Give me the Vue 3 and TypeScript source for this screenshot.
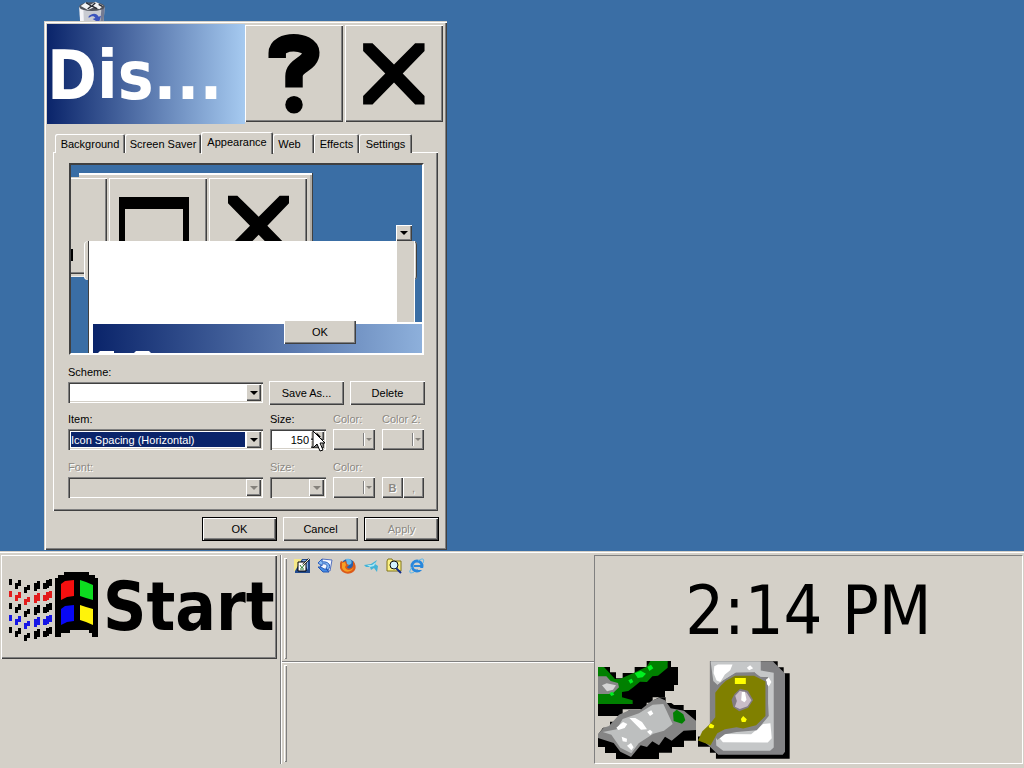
<script setup lang="ts">
import { ref } from 'vue'

const tabs = ['Background', 'Screen Saver', 'Appearance', 'Web', 'Effects', 'Settings']
const activeTab = ref('Appearance')
const scheme = ref('')
const item = ref('Icon Spacing (Horizontal)')
const size = ref('150')

interface Dash { x: number; y: number; w: number; h: number; c: string }
const dashColors = ['#000', '#e21b1b', '#000', '#1616e6', '#000']
const dashCells = [
  { x: 1, y: 8, w: 3, h: 6 },
  { x: 7, y: 12, w: 3, h: 6 },
  { x: 10, y: 9, w: 3, h: 6 },
  { x: 16, y: 16, w: 3, h: 6 },
  { x: 19, y: 14, w: 3, h: 5 },
  { x: 26, y: 12, w: 3, h: 8 },
  { x: 29, y: 10, w: 3, h: 8 },
  { x: 35, y: 12, w: 4, h: 6 },
  { x: 38, y: 9, w: 3, h: 8 },
  { x: 41, y: 8, w: 3, h: 7 },
]
const dashes: Dash[] = dashColors.flatMap((c, row) =>
  dashCells.map((d) => ({ ...d, y: d.y + row * 12, c })),
)
const cross = '0,0 28,0 92,63 155,0 183,0 183,23 118,90 183,157 183,182 155,182 92,117 28,182 0,182 0,157 66,90 0,23'
</script>

<template>
  <div class="screen">
    <main class="desktop">
      <svg class="bin" viewBox="0 0 120 78" aria-label="Recycle Bin">
        <path d="M22 20L98 20L94 78H25Z" fill="#c9cbd2" />
        <path d="M22 20L34 26L36 78H25Z" fill="#f4f4f8" />
        <path d="M88 28L98 20L94 78H84Z" fill="#747b92" />
        <ellipse cx="60" cy="20" rx="38" ry="13" fill="#50535c" />
        <path d="M26 18L42 7L56 14L70 5L94 17L82 28L66 22L48 30Z" fill="#f2f3f5" />
        <path d="M42 8L58 18L47 27M70 8L60 18L75 26M80 13L92 20" stroke="#252932" stroke-width="4" fill="none" />
        <path d="M50 49C60 38 75 39 80 50L87 47L81 68L62 57L70 54C66 47 58 48 50 54Z" fill="#3b54bd" />
        <path d="M46 66L57 62L68 78H47Z" fill="#7c8dd8" />
      </svg>

      <section class="dialog" aria-label="Display Properties">
        <header class="titlebar">
          <h1>Dis...</h1>
          <button class="caption raised" aria-label="Help">
            <svg viewBox="615 76 292 288">
              <path d="M711 174V160C711 117 809 119 811 158C812 192 761 194 761 228V262" fill="none" stroke="#000" stroke-width="52" />
              <circle cx="761" cy="313" r="26" />
            </svg>
          </button>
          <button class="caption raised" aria-label="Close">
            <svg viewBox="918 76 292 288"><polygon transform="translate(972 130)" :points="cross" /></svg>
          </button>
        </header>

        <nav class="tabs" role="tablist">
          <button v-for="t in tabs" :key="t" role="tab" class="tab" :class="{ active: t === activeTab }" :aria-selected="t === activeTab" @click="activeTab = t">{{ t }}</button>
        </nav>

        <div class="panel">
          <div class="preview">
            <div class="pv-inactive">
              <div class="pv-bar">
                <span class="pv-cap pv-min"><i></i></span>
                <span class="pv-cap"><svg viewBox="0 0 98 96"><path d="M10 19H80V90H10ZM16 31V84H74V31Z" fill-rule="evenodd" /></svg></span>
                <span class="pv-cap"><svg viewBox="480 70 294 288"><polygon transform="translate(537 123)" :points="cross" /></svg></span>
              </div>
            </div>
            <div class="pv-frame"></div>
            <div class="pv-window"></div>
            <span class="pv-arrow raised"><b class="tri"></b></span>
            <div class="pv-message">
              <svg viewBox="0 0 60 2"><path d="M7 0H21V2H5ZM43 0H56L58 2H41Z" fill="#fff" /></svg>
            </div>
            <button class="pv-ok raised">OK</button>
          </div>

          <form class="form" @submit.prevent>
            <div class="row">
              <div class="field wide">
                <label for="scheme">Scheme:</label>
                <div class="combo">
                  <select id="scheme" v-model="scheme"><option value=""></option></select>
                  <span class="arrow raised"><b class="tri"></b></span>
                </div>
              </div>
              <button type="button" class="btn raised">Save As...</button>
              <button type="button" class="btn raised">Delete</button>
            </div>

            <div class="grid">
              <div class="field">
                <label for="item">Item:</label>
                <div class="combo">
                  <select id="item" v-model="item" class="picked"><option>Icon Spacing (Horizontal)</option></select>
                  <span class="arrow raised"><b class="tri"></b></span>
                </div>
              </div>
              <div class="field">
                <label for="size">Size:</label>
                <div class="combo">
                  <input id="size" v-model="size" type="text" />
                  <span class="spin"><button type="button" class="raised" aria-label="Increase"><b class="tri up"></b></button><button type="button" class="raised" aria-label="Decrease"><b class="tri"></b></button></span>
                </div>
              </div>
              <div class="field off">
                <label for="color1">Color:</label>
                <button id="color1" type="button" class="swatch raised" disabled><i></i><b class="tri"></b></button>
              </div>
              <div class="field off">
                <label for="color2">Color 2:</label>
                <button id="color2" type="button" class="swatch raised" disabled><i></i><b class="tri"></b></button>
              </div>

              <div class="field off">
                <label for="font">Font:</label>
                <div class="combo">
                  <select id="font" disabled><option></option></select>
                  <span class="arrow raised"><b class="tri"></b></span>
                </div>
              </div>
              <div class="field off">
                <label for="fsize">Size:</label>
                <div class="combo">
                  <select id="fsize" disabled><option></option></select>
                  <span class="arrow raised"><b class="tri"></b></span>
                </div>
              </div>
              <div class="field off">
                <label for="color3">Color:</label>
                <button id="color3" type="button" class="swatch raised" disabled><i></i><b class="tri"></b></button>
              </div>
              <div class="field off styles">
                <button type="button" class="raised bold" disabled>B</button>
                <button type="button" class="raised" disabled>,</button>
              </div>
            </div>
          </form>
        </div>

        <footer class="actions">
          <button class="btn raised framed">OK</button>
          <button class="btn raised">Cancel</button>
          <button class="btn raised framed" disabled>Apply</button>
        </footer>
      </section>

      <svg class="cursor" viewBox="0 0 13 22">
        <path d="M1 1V18L5 14L8 21L11 20L8 13H13Z" fill="#fff" stroke="#000" />
      </svg>
    </main>

    <footer class="taskbar">
      <div class="start-area">
        <button class="start raised">
          <svg class="flag" viewBox="0 0 92 72">
            <rect v-for="(d, i) in dashes" :key="i" :x="d.x" :y="d.y" :width="d.w" :height="d.h" :fill="d.c" />
            <path d="M47 7H50V4H56V1H81V4H87V7H90V66H84V62H81V59H62V62H53V66H47Z" />
            <path d="M53 13L57 10L66 9V25L59 26L53 29Z" fill="#f40f0f" />
            <path d="M72 9L78 11L85 14V29L78 27L72 25Z" fill="#0ddc20" />
            <path d="M53 38L57 35L66 34V50L59 51L53 54Z" fill="#0808f5" />
            <path d="M72 34L78 36L85 38V54L78 51L72 49Z" fill="#fff30a" />
          </svg>
          <span>Start</span>
        </button>
      </div>

      <div class="bands">
        <div class="band">
          <span class="grip"></span>
          <a href="#" aria-label="Show Desktop">
            <svg viewBox="0 0 16 16"><path d="M0 1H16V15H1V13H0Z" fill="#234b8e" /><path d="M0 1H8L1 13H0Z" fill="#f5e889" /><path d="M8 2H14V12Z" fill="#80abe2" /><path d="M4 4H12V13H4Z" fill="#fff" stroke="#000" /><path d="M15 1L9 7" fill="none" stroke="#222" stroke-width="2" /><path d="M15 1L9 7" stroke="#f1ead0" /><path d="M6 7L8 10L10 7M6 11H10" fill="none" stroke="#26792a" /></svg>
          </a>
          <a href="#" aria-label="Outlook Express">
            <svg viewBox="0 0 16 16"><path d="M5 1L15 2L13 13L3 11Z" fill="#f4f7ff" stroke="#5370bd" /><path d="M5 1L1 5L5 8V6C10 5 11 8 9 10L11 12C15 7 11 3 5 4Z" fill="#83b8f2" stroke="#2e60bd" /><path d="M1 9L6 14H12L9 11H7L4 9Z" fill="#438ae5" stroke="#2759b4" /></svg>
          </a>
          <a href="#" aria-label="Firefox">
            <svg viewBox="0 0 16 16"><circle cx="8" cy="8" r="7" fill="#2862ac" /><path d="M6 1C10 0 13 3 11 6L7 8Z" fill="#67b9e9" /><path d="M1 3L3 4L6 3L7 6L9 7L7 9C8 12 13 10 13 7V3C16 6 17 11 13 14C9 17 2 16 0 10C-1 7 0 5 1 3Z" fill="#dc5a18" /><path d="M2 5L5 4L6 7L5 9C6 13 11 13 14 9C12 15 4 15 2 10Z" fill="#f6a025" /></svg>
          </a>
          <a href="#" aria-label="Messenger">
            <svg viewBox="0 0 16 16"><path d="M1 7L8 6L14 2L12 6L15 8L14 14L11 10L8 12L7 9L3 9Z" fill="#41b3d8" /><path d="M4 7L9 7L13 4L11 8L7 9Z" fill="#a9e6f3" /></svg>
          </a>
          <a href="#" aria-label="Search">
            <svg viewBox="0 0 16 16"><path d="M1 3L2 1H6L7 3H15V13H1Z" fill="#fbf183" stroke="#81751a" /><circle cx="8" cy="7" r="4" fill="#d4f3ff" stroke="#111" /><path d="M10 10L15 15" stroke="#132d8b" stroke-width="2" /></svg>
          </a>
          <a href="#" aria-label="Internet Explorer">
            <svg viewBox="0 0 16 16"><circle cx="8" cy="8" r="5" fill="none" stroke="#2887dc" stroke-width="3" /><path d="M9 10H15V12H9Z" fill="#d4d0c8" /><path d="M5 7H13V9H5Z" fill="#2887dc" /><path d="M3 9C-1 15 1 16 5 14M9 3C13 0 16 0 14 5" fill="none" stroke="#55b7ef" stroke-width="1" /></svg>
          </a>
        </div>
        <div class="band"><span class="grip"></span></div>
      </div>

      <div class="tray">
        <time>2:14 PM</time>
        <div class="tray-icons">
          <svg class="t1" viewBox="24 33 294 294">
            <path d="M24 51H60V67H78V85H98V69H134V51H170V33H243V51H264V105H252V123H225V142H188V158H170V178H98V198H24Z" />
            <path d="M24 51H42L75 87H90L132 68L170 50L181 33H233V53L204 77L187 79L171 96L150 95L130 112L115 123L96 126V142L128 151V162H24Z" fill="#008000" />
            <path d="M24 79H49L62 93L84 99L87 112L66 132H24Z" fill="#878787" />
            <path d="M36 106L50 100L78 106L69 119L51 124Z" fill="#d5d5d5" />
            <path d="M134 70L152 62L168 71L158 82L143 84ZM172 51L183 44L190 55L178 63ZM115 91L125 86L130 96L121 101ZM58 130L67 125L73 134L64 138Z" fill="#00f020" />
            <path d="M24 254L39 233H60V215H98V198L117 181L151 180L187 152L208 142H227V159H244L252 165H281V180H318V272H282V291H246V308H207V327H78V309H45V291H24Z" />
            <path d="M24 252L41 233L57 228L87 194L121 179L151 180L187 151L208 143L225 151L242 175L282 182L318 212V240L281 242L245 272L225 260L207 286L187 274L171 291L152 286L123 321L91 305L71 279L24 264Z" fill="#858585" />
            <path d="M38 246L80 238L98 207L147 190L188 164L220 162L248 222L222 242L190 251L146 280L124 310L91 293L64 254Z" fill="#bdbfbf" />
            <path d="M79 233L99 216L112 222L104 234L85 240ZM118 204H136L156 216L171 238L153 239ZM172 187L184 181L190 191L180 198ZM95 260L111 266L110 276L98 274ZM111 287L123 279L131 292L124 301ZM171 245L180 239L188 246L181 255Z" fill="#fff" />
            <path d="M249 188L260 179L280 193L286 211L276 221L251 213Z" fill="#008000" />
          </svg>
          <svg class="t2" viewBox="324 33 277 294">
            <path d="M360 33H564V51H582V69H600V327H378V309H360V291H324V260H360Z" />
            <path d="M360 33H549L586 70V306L579 315H385L360 291L348 280L360 223Z" fill="#828284" />
            <path d="M362 33H513V61L552 68V293L541 303H400L379 287L378 264L403 248L501 239L535 198V81L502 80L495 66L438 68L400 91L383 105L370 93Z" fill="#c5c7c8" />
            <path d="M373 48L384 43H428L421 60L405 73L391 96L380 91L371 69ZM471 53L481 45L490 54L478 60ZM529 88L537 82L545 96L537 109L529 99ZM389 265L404 252L484 253L520 222L542 220L546 265L534 278L399 277Z" fill="#fff" />
            <path d="M400 91L438 68H495L531 94L537 198L501 241L440 246L405 253L382 270L370 250L362 130L383 105Z" fill="#828284" />
            <path d="M436 77H493L527 94V198L499 226L460 236L440 232L405 238L382 250L362 286L324 272L337 244L360 222L376 202V128L393 106L408 92Z" fill="#808000" />
            <path d="M434 132L451 116L474 122L490 150L475 173L448 184L430 171L425 149Z" fill="#827b82" />
            <path d="M436 137L450 122L470 127L485 151L473 169L450 177L435 170L441 153Z" fill="#c9bdc8" />
            <path d="M456 126L465 125L470 149L464 157L454 151Z" fill="#fff" />
            <path d="M435 84H468V102H435ZM453 207L460 198L471 208L467 216H456ZM356 228L362 221L373 227L370 235L359 234Z" fill="#ff0" />
          </svg>
        </div>
      </div>
    </footer>
  </div>
</template>

<style>
body { margin: 0; background: #3a6ea5; }
</style>

<style scoped>
* { box-sizing: border-box; }
.screen { min-height: 100vh; display: flex; flex-direction: column; font: 11px/14px "Liberation Sans", Arial, sans-serif; color: #000; }
button, input, select { font: inherit; color: inherit; margin: 0; padding: 0; border: 0; background: none; border-radius: 0; }
svg { display: block; }
.desktop { position: relative; flex: 1; min-height: 551px; background: #3a6ea5; overflow: hidden; }
.bin { position: absolute; left: 72px; top: 0; width: 40px; height: 26px; }
.raised { background: #d4d0c8; box-shadow: inset 1px 1px #fff, inset -1px -1px #404040, inset -2px -2px #808080; }

.dialog { position: absolute; left: 44px; top: 21px; width: 403px; padding: 3px 4px 9px 3px; background: #d4d0c8; box-shadow: inset 1px 1px #d4d0c8, inset 2px 2px #fff, inset -1px -1px #404040, inset -2px -2px #808080; }
.titlebar { display: flex; gap: 2px; height: 100px; align-items: flex-start; padding-top: 1px; background: linear-gradient(90deg, #0a246a, #a6caf0 198px, #d4d0c8 198px); }
.titlebar h1 { flex: 1; margin: 0; white-space: nowrap; color: #fff; font: bold 67px/102px "DejaVu Sans Condensed", "DejaVu Sans", sans-serif; min-width: 0; }
.caption { width: 98px; height: 97px; flex: none; }
.caption svg { width: 98px; height: 97px; }

.tabs { display: grid; grid-template-columns: 70fr 76fr 72fr 41fr 45fr 53fr; align-items: end; height: 22px; margin: 7px 31px 0 8px; position: relative; }
.tab { height: 19px; line-height: 20px; min-width: 0; white-space: nowrap; text-align: center; background: #d4d0c8; box-shadow: inset 1px 1px #fff, inset -1px 0 #404040, inset -2px 0 #808080; border-radius: 2px 2px 0 0; }
.tab:nth-child(4) { padding-right: 8px; }
.tab.active { height: 22px; margin-bottom: -1px; padding-bottom: 2px; z-index: 1; }
.panel { margin: -1px 5px 0 6px; padding: 11px 14px 13px 16px; box-shadow: inset 1px 1px #fff, inset -1px -1px #404040, inset -2px -2px #808080; }

.preview { position: relative; height: 192px; border: 2px solid; border-color: #404040 #fff #fff #404040; background: #3a6ea5; overflow: hidden; }
.pv-inactive { position: absolute; left: -62px; top: 8px; width: 304px; height: 104px; background: #d4d0c8; box-shadow: inset -1px 0 #404040, inset 0 2px #fff, inset -3px 0 #b0aca5; border-bottom: 1px solid #eee; }
.pv-inactive::before { content: ""; position: absolute; left: 0; top: 0; width: 70px; height: 4px; background: #3a6ea5; }
.pv-bar { display: flex; gap: 2px; padding-top: 5px; }
.pv-cap { width: 98px; height: 96px; flex: none; box-shadow: inset 1px 1px #fff, inset -1px -1px #404040, inset -2px -2px #808080; }
.pv-cap svg { width: 98px; height: 96px; }
.pv-min i { display: block; width: 42px; height: 12px; margin: 71px 0 0 22px; background: #000; }
.pv-frame { position: absolute; left: 13px; top: 76px; width: 333px; height: 39px; background: #d4d0c8; border-radius: 4px; box-shadow: inset 1px 0 #fff, inset -1px 0 #404040; }
.pv-window { position: absolute; left: 17px; top: 76px; width: 326px; height: 112px; background: #fff; border-left: 1px solid #404040; border-right: 17px solid #d4d0c8; box-shadow: 1px 0 #fff; }
.pv-arrow { position: absolute; left: 325px; top: 60px; width: 16px; height: 16px; display: grid; place-items: center; }
.pv-message { position: absolute; left: 20px; right: 0; top: 157px; bottom: 0; border: solid #fff; border-width: 2px 0 0 2px; background: linear-gradient(90deg, #0a246a, #a6caf0 390px); display: flex; align-items: flex-end; }
.pv-message svg { width: 60px; height: 2px; }
.pv-ok { position: absolute; left: 213px; top: 155px; width: 72px; height: 24px; }

.tri { display: block; border: solid transparent; border-width: 4px 4px 0; border-top-color: #000; }
.tri.up { border-width: 0 4px 4px; border-bottom-color: #000; }
.form { padding-top: 10px; margin-left: -1px; }
.row { display: flex; align-items: flex-end; gap: 6px; height: 40px; margin-right: -1px; }
.field { display: flex; flex-direction: column; gap: 3px; min-width: 0; white-space: nowrap; }
.field.wide { flex: 1; margin-bottom: 2px; }
.combo { display: flex; height: 21px; padding: 2px; background: #fff; box-shadow: inset 1px 1px #808080, inset 2px 2px #404040, inset -1px -1px #fff, inset -2px -2px #d4d0c8; position: relative; }
.combo select { flex: 1; width: 100%; min-width: 0; appearance: none; padding: 0 18px 0 2px; margin: 0; opacity: 1; outline: 0; }
.combo select.picked { background: #0a246a; color: #fff; background-clip: padding-box; border: 1px solid #fff; border-right: 16px solid #fff; padding: 0; }
.combo input { width: 100%; min-width: 0; text-align: right; padding-right: 1px; outline: 0; }
.arrow { position: absolute; right: 2px; top: 2px; bottom: 2px; width: 15px; display: grid; place-items: center; pointer-events: none; }
.spin { display: flex; flex-direction: column; flex: none; width: 14px; }
.spin button { flex: 1; display: grid; place-items: center; min-height: 0; }
.btn { width: 75px; height: 24px; flex: none; }
.grid { display: grid; grid-template-columns: 195fr 56fr 42fr 42fr; gap: 10px 7px; margin-top: 7px; }
.off { color: #8b8882; text-shadow: 1px 1px #fff; }
.off .combo { background: #d4d0c8; }
.off .tri { border-top-color: #85827c; }
.swatch { height: 21px; width: 100%; display: flex; align-items: center; justify-content: flex-end; gap: 1px; padding-right: 3px; }
.swatch i { width: 2px; height: 13px; background: #808080; border-right: 1px solid #fff; }
.swatch .tri { border-width: 3px 3px 0; }
.off button { color: #8b8882; text-shadow: 1px 1px #fff; }
.styles { flex-direction: row; align-items: flex-end; gap: 0; }
.styles button { flex: 1; height: 21px; }
.bold { font-weight: bold; }
.actions { display: flex; justify-content: flex-end; gap: 6px; padding: 6px 4px 0 0; }
.framed { border: 1px solid #000; }
.actions .btn:disabled { color: #8b8882; text-shadow: 1px 1px #fff; }
.cursor { position: absolute; left: 312px; top: 430px; width: 13px; height: 22px; }

.taskbar { display: flex; height: 217px; padding: 4px 1px 4px 1px; background: #d4d0c8; box-shadow: inset 0 1px #d4d0c8, inset 0 2px #fff; }
.start-area { width: 280px; flex: none; border-right: 1px solid #808080; }
.start { width: 276px; height: 104px; display: flex; align-items: center; padding-left: 7px; font: bold 67px/104px "DejaVu Sans Condensed", "DejaVu Sans", sans-serif; }
.start span { margin-left: 3px; }
.flag { width: 92px; height: 72px; flex: none; }
.bands { flex: 1; display: flex; flex-direction: column; border-left: 1px solid #fff; }
.band { flex: 1; display: flex; align-items: flex-start; gap: 7px; padding: 3px 0 2px 2px; }
.band:first-child { flex: none; height: 106px; }
.band + .band { border-top: 1px solid #808080; box-shadow: inset 0 1px #fff; }
.grip { align-self: stretch; width: 3px; background: #d4d0c8; box-shadow: inset 1px 1px #fff, inset -1px -1px #808080; }
.band a { width: 16px; height: 16px; }
.band svg { width: 16px; height: 16px; }
.tray { flex: 0 0 42%; border: 1px solid; border-color: #808080 #fff #fff #808080; display: flex; flex-direction: column; padding: 0 3px; }
.tray time { text-align: center; height: 105px; font: 68px/109px "DejaVu Sans Condensed", "DejaVu Sans", sans-serif; }
.tray-icons { display: flex; gap: 2px; }
.t1 { width: 98px; height: 98px; }
.t2 { width: 92px; height: 98px; }
</style>
